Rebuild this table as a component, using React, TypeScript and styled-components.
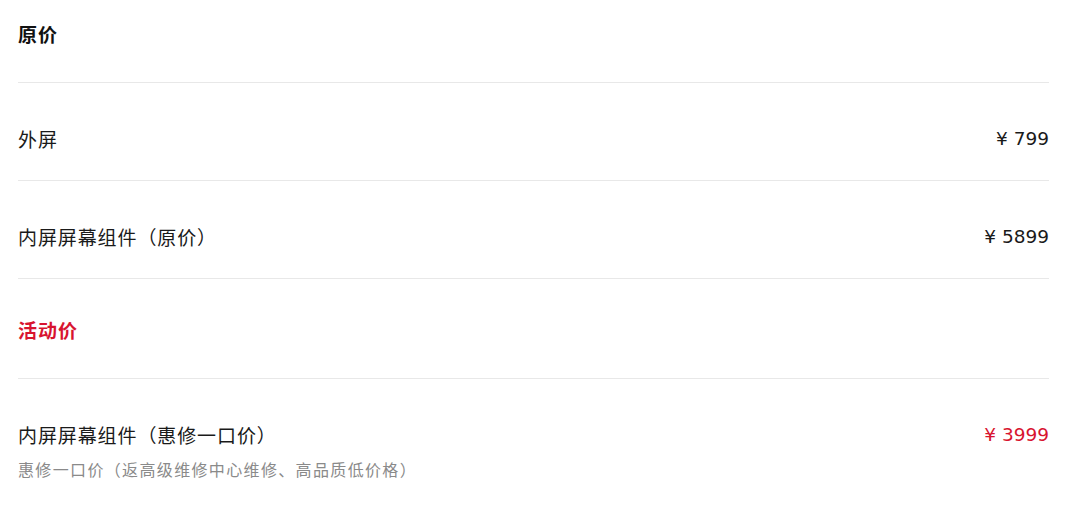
import React from "react";
import styled, { createGlobalStyle } from "styled-components";

const GlobalStyle = createGlobalStyle`
  html, body { margin: 0; padding: 0; background: #ffffff; }
  body { font-family: "Noto Sans", "Noto Sans CJK SC", sans-serif; }
`;

const Page = styled.div`
  padding: 0 31px 0 18px;
  width: 1080px;
  box-sizing: border-box;
`;

const Heading = styled.div<{ $red?: boolean; $first?: boolean }>`
  font-family: "Noto Sans CJK SC", "Noto Sans", sans-serif;
  font-weight: 700;
  font-size: 19px;
  letter-spacing: 1px;
  line-height: 28px;
  color: ${(p) => (p.$red ? "#d8142f" : "#111111")};
  padding: ${(p) => (p.$first ? "20px" : "37px")} 0 34px;
  border-top: ${(p) => (p.$first ? "none" : "1px solid #e8e8e8")};
`;

const Row = styled.div`
  display: flex;
  justify-content: space-between;
  align-items: flex-start;
  border-top: 1px solid #e8e8e8;
  padding: 42px 0 27px;
`;

const Info = styled.div`
  display: flex;
  flex-direction: column;
`;

const Name = styled.div`
  font-family: "Noto Sans CJK SC", sans-serif;
  font-size: 19px;
  letter-spacing: 0.9px;
  line-height: 28px;
  color: #1a1a1a;
`;

const Note = styled.div`
  font-family: "Noto Sans CJK SC", sans-serif;
  font-size: 16px;
  letter-spacing: 1.35px;
  line-height: 24px;
  color: #8a8a8a;
  margin-top: 8px;
`;

const Price = styled.div<{ $red?: boolean }>`
  font-family: "DejaVu Sans", "Noto Sans", sans-serif;
  font-size: 18.5px;
  line-height: 28px;
  color: ${(p) => (p.$red ? "#d8142f" : "#1a1a1a")};
  white-space: pre;
`;

type Item = { name: string; price: string; note?: string; red?: boolean };

const original: Item[] = [
  { name: "外屏", price: "¥ 799" },
  { name: "内屏屏幕组件（原价）", price: "¥ 5899" },
];

const promo: Item[] = [
  {
    name: "内屏屏幕组件（惠修一口价）",
    price: "¥ 3999",
    note: "惠修一口价（返高级维修中心维修、高品质低价格）",
    red: true,
  },
];

const PriceRow = ({ item }: { item: Item }) => (
  <Row>
    <Info>
      <Name>{item.name}</Name>
      {item.note && <Note>{item.note}</Note>}
    </Info>
    <Price $red={item.red}>{item.price}</Price>
  </Row>
);

export default function App() {
  return (
    <>
      <GlobalStyle />
      <Page>
        <Heading $first>原价</Heading>
        {original.map((it) => (
          <PriceRow key={it.name} item={it} />
        ))}
        <Heading $red>活动价</Heading>
        {promo.map((it) => (
          <PriceRow key={it.name} item={it} />
        ))}
      </Page>
    </>
  );
}
